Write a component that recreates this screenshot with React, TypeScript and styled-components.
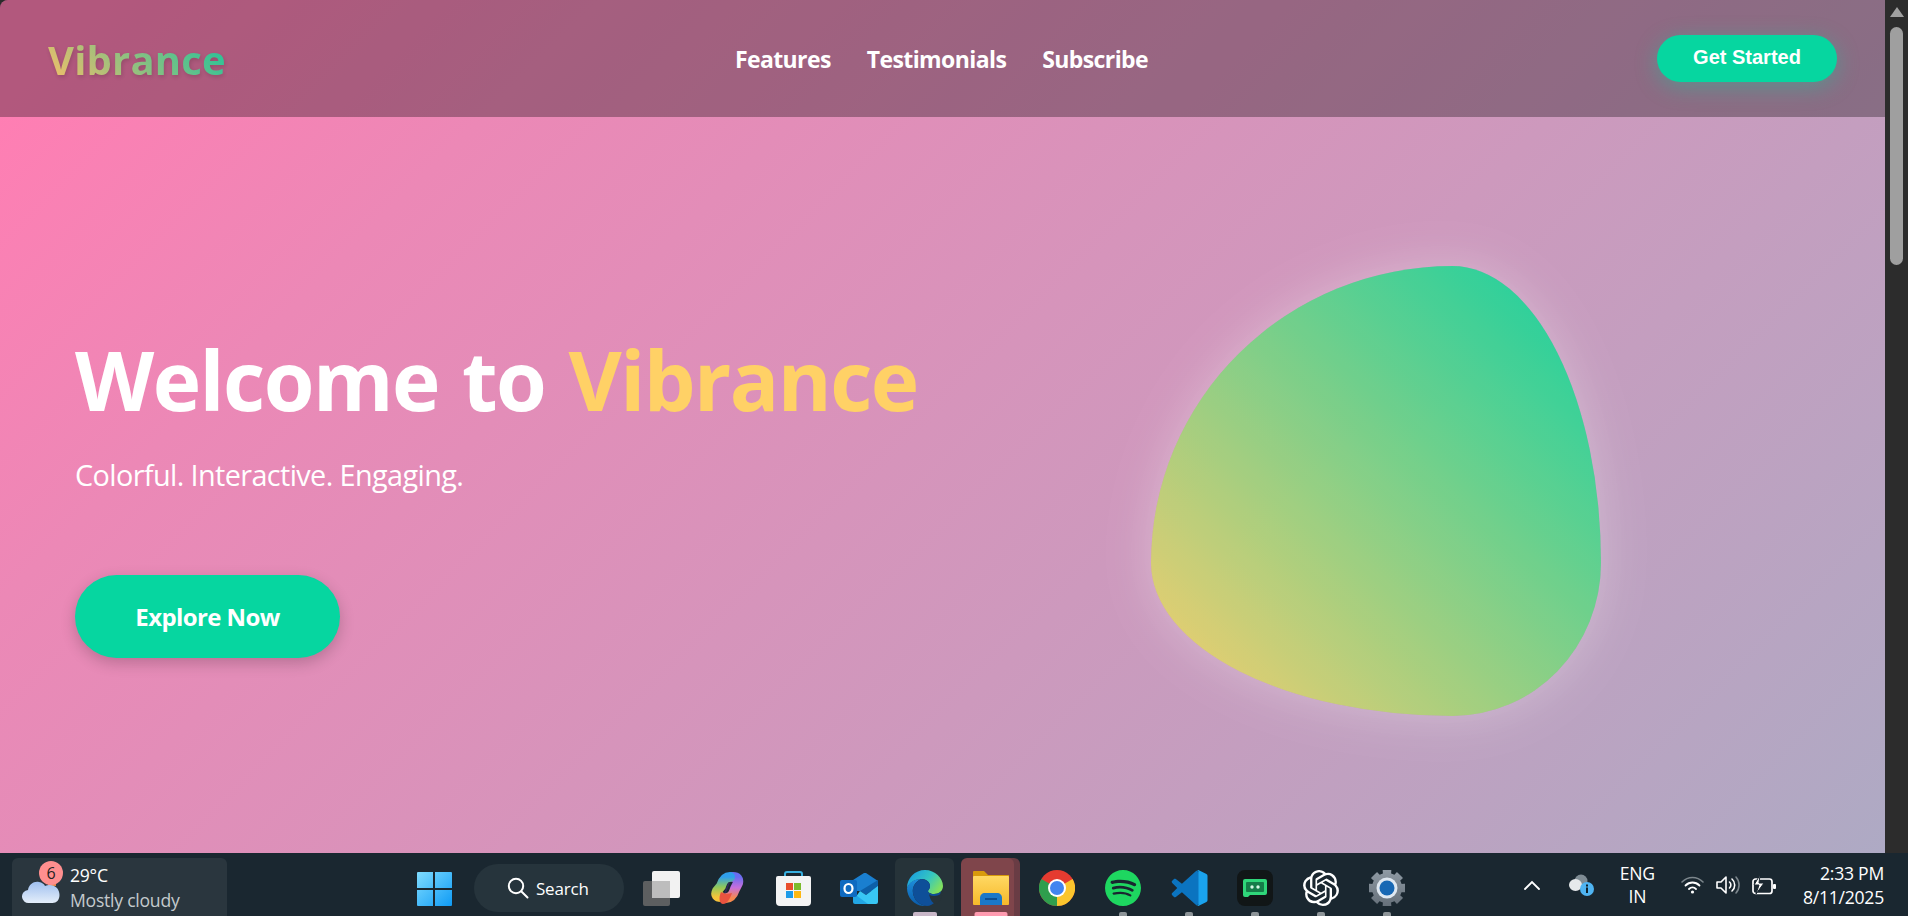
import React from "react";
import styled, { createGlobalStyle } from "styled-components";
import { SiOpenai, SiSpotify } from "react-icons/si";

const Global = createGlobalStyle`
  html, body { margin: 0; padding: 0; height: 100%; overflow: hidden; background: #1a2730; }
  #root { height: 100%; }
  * { box-sizing: border-box; }
`;

const Screen = styled.div`
  width: 1908px; height: 916px; display: flex; flex-direction: column;
  font-family: "Open Sans", "Noto Sans", sans-serif;
  background: #2b2b2b; overflow: hidden;
`;
const BrowserArea = styled.div`flex: 1; min-height: 0; display: flex;`;
const Page = styled.main`
  flex: 1; min-width: 0; display: flex; flex-direction: column;
  border-top-left-radius: 8px; overflow: hidden;
  background: linear-gradient(135deg, #ff7eb3 4%, #ec88b6 22%, #aeaac4 100%);
`;
const Header = styled.header`
  height: 117px; flex: none; display: flex; align-items: center; justify-content: space-between;
  padding: 0 48px; background: rgba(0, 0, 0, 0.3);
`;
const Logo = styled.div`
  font-size: 40px; font-weight: 700; line-height: 1; letter-spacing: 0.2px; margin-top: 3px;
  background: linear-gradient(45deg, #ffd166, #06d6a0);
  -webkit-background-clip: text; background-clip: text; color: transparent;
  filter: drop-shadow(1px 2px 2px rgba(0,0,0,.18)); opacity: .85;
`;
const Nav = styled.nav`display: flex; gap: 36px; margin-top: 2px;`;
const NavLink = styled.a`
  color: #fff; font-size: 23px; font-weight: 700; letter-spacing: -0.6px; line-height: 1;
`;
const GetStarted = styled.button`
  width: 180px; height: 47px; border: 0; border-radius: 24px; background: #06d6a0; color: #fff;
  font-family: "Liberation Sans", Arial, sans-serif; font-size: 20px; font-weight: 700; padding: 0 0 2px;
  box-shadow: 0 5px 22px rgba(6, 214, 160, 0.35);
  margin-top: -1px;
`;
const Hero = styled.section`
  flex: 1; min-height: 0; display: grid; grid-template-columns: 1fr 1fr; align-items: center;
  padding: 12px 76px 0 75px;
`;
const Copy = styled.div`display: flex; flex-direction: column; align-items: flex-start; margin-top: 6px;`;
const Title = styled.h1`
  margin: 0; font-size: 82px; font-weight: 700; line-height: 1.2; color: #fff; letter-spacing: -1.55px; word-spacing: 3.5px; white-space: nowrap;
`;
const Accent = styled.span`color: #ffd166;`;
const Subtitle = styled.p`
  margin: 28px 0 0; color: #fff; font-size: 28.8px; line-height: 1.3; font-weight: 400; letter-spacing: -0.6px;
`;
const Explore = styled.button`
  margin-top: 82px; width: 265px; height: 83px; border: 0; border-radius: 42px; background: #06d6a0; color: #fff;
  font-family: inherit; font-size: 24px; font-weight: 700; letter-spacing: -0.6px;
  box-shadow: 0 5px 15px rgba(0, 0, 0, 0.2);
`;
const BlobCell = styled.div`display: flex; justify-content: center;`;
const Blob = styled.div`
  width: 450px; height: 450px;
  border-radius: 67% 33% 33% 67% / 66% 66% 34% 34%;
  background: linear-gradient(45deg, #ffd166, #06d6a0);
  opacity: 0.93;
  box-shadow: 0 0 50px rgba(255, 255, 255, 0.32);
`;
const Scrollbar = styled.div`
  width: 23px; flex: none; background: #2c2c2c; display: flex; flex-direction: column; align-items: center; padding-top: 7px;
`;
const ScrollArrow = styled.div`
  width: 0; height: 0; border-left: 7px solid transparent; border-right: 7px solid transparent;
  border-bottom: 10px solid #a0a0a0;
`;
const ScrollThumb = styled.div`
  width: 13px; height: 238px; margin-top: 10px; border-radius: 7px; background: #9f9f9f;
`;

const Taskbar = styled.footer`
  height: 63px; flex: none; display: flex; align-items: flex-start; padding-left: 12px;
  background: #1a2730; color: #fff; font-family: "Open Sans", "Noto Sans", sans-serif;
`;
const Weather = styled.div`
  position: relative; width: 215px; height: 58px; margin-top: 5px; flex: none;
  background: rgba(255,255,255,.07); border-radius: 6px 6px 0 0;
  display: flex; align-items: center; gap: 10px; padding-left: 10px;
`;
const Badge = styled.span`
  position: absolute; left: 27px; top: 3px; width: 24px; height: 24px; border-radius: 50%;
  background: #ff8f8f; color: #222; font-size: 16px; display: flex; align-items: center; justify-content: center;
`;
const WeatherText = styled.div`display: flex; flex-direction: column; gap: 2px; font-size: 17.6px; line-height: 23px; letter-spacing: -0.25px; margin-top: 2px; white-space: nowrap;`;
const Muted = styled.span`color: #c4cacd;`;
const StartBtn = styled.div`margin: 19px 0 0 190px; width: 35px; height: 34px; flex: none; display: flex;`;
const SearchPill = styled.div`
  margin: 11px 0 0 22px; width: 150px; height: 48px; border-radius: 24px; flex: none;
  background: #26343c; display: flex; align-items: center; gap: 7px; padding-left: 33px;
  font-size: 17px; letter-spacing: -0.2px;
`;
const Apps = styled.div`display: flex; margin-left: 4px; flex: none;`;
const AppCell = styled.div<{ $tone?: "active" | "open" }>`
  position: relative; width: 66px; height: 63px; display: flex; align-items: center; justify-content: center; padding: 17px 0 10px;
  &::before {
    content: ""; position: absolute; top: 5px; bottom: 0; left: 3px; right: ${(p) => (p.$tone === "open" ? 10 : 4)}px; border-radius: 6px 6px 0 0;
    background: ${(p) => (p.$tone === "active" ? "#263339" : p.$tone === "open" ? "#7f454b" : "transparent")};
    box-shadow: ${(p) => (p.$tone === "open" ? "6px 0 0 #693c44" : "none")};
  }
  & > svg { position: relative; }
`;
const Indicator = styled.span<{ $w: number; $c: string }>`
  position: absolute; bottom: 0; left: 50%; transform: translateX(-50%); width: ${(p) => p.$w}px; height: 4px;
  border-radius: 2px 2px 0 0; background: ${(p) => p.$c};
`;
const Tray = styled.div`
  margin-left: auto; padding-right: 24px; height: 63px; display: flex; align-items: center; gap: 26px; flex: none;
`;
const Lang = styled.div`display: flex; flex-direction: column; align-items: center; font-size: 17.6px; line-height: 23px; letter-spacing: -0.25px;`;
const Quick = styled.div`display: flex; align-items: center; gap: 12px;`;
const Clock = styled.div`display: flex; flex-direction: column; align-items: flex-end; font-size: 17.6px; line-height: 24px; letter-spacing: -0.25px;`;
const ChevronSvg = styled.svg`margin-right: 3px;`;

const Win = () => (
  <svg width="35" height="34" viewBox="0 0 35 34">
    <defs><linearGradient id="w" x1="0" y1="0" x2="1" y2="1"><stop offset="0" stopColor="#7fdcff" /><stop offset="1" stopColor="#0f9bf5" /></linearGradient></defs>
    <path fill="url(#w)" d="M1 0h15v16H0V1a1 1 0 0 1 1-1zM18 0h16a1 1 0 0 1 1 1v15H18zM0 18h16v16H1a1 1 0 0 1-1-1zM18 18h17v15a1 1 0 0 1-1 1H18z" />
  </svg>
);
const SearchIcon = () => (
  <svg width="22" height="22" viewBox="0 0 22 22" fill="none" stroke="#fff" strokeWidth="2"><circle cx="9" cy="9" r="7.2" /><path d="M14.2 14.2 20.5 20.5" strokeLinecap="round" /></svg>
);
const CloudIcon = () => (
  <svg width="38" height="38" viewBox="0 0 38 38" style={{ marginTop: 8, flex: "none" }}>
    <defs><linearGradient id="c" x1="0" y1="0" x2="0" y2="1"><stop offset="0" stopColor="#9fbfef" /><stop offset="1" stopColor="#e4eefa" /></linearGradient></defs>
    <rect x="26" y="8" width="8" height="6" fill="#e8853f" />
    <path fill="url(#c)" d="M7 31a6.5 6.5 0 0 1-1-13c1-6 6-9 11-8 3 .5 5 2 6 4 4-2 9-1 12 2 1.500 2 2.500 4 2.500 7 0 5-3 8-7 8z" />
  </svg>
);
const TaskView = () => (
  <svg width="37" height="35" viewBox="0 0 37 35">
    <rect x="9" y="0" width="28" height="27" rx="2" fill="#f2f2f2" />
    <rect x="0" y="10" width="27" height="25" rx="2" fill="#5d5f60" />
    <rect x="9" y="10" width="18" height="17" fill="#bdbdbd" />
  </svg>
);
const Copilot = () => (
  <svg width="34" height="32" viewBox="0 0 34 32" fill="none" strokeLinecap="round">
    <defs>
      <linearGradient id="cp1" x1="0" y1="0" x2="0" y2="1"><stop offset="0" stopColor="#2f9fec" /><stop offset=".5" stopColor="#8fc95a" /><stop offset="1" stopColor="#f5c33a" /></linearGradient>
      <linearGradient id="cp2" x1="0" y1="0" x2="0" y2="1"><stop offset="0" stopColor="#6a6cf0" /><stop offset=".5" stopColor="#c76fdc" /><stop offset="1" stopColor="#f5894e" /></linearGradient>
    </defs>
    <path stroke="url(#cp2)" strokeWidth="10" d="M16 26c5 0 7-3 9-9l3-6c1-4-1-6-5-6" />
    <path stroke="url(#cp1)" strokeWidth="10" d="M20 5c-5 0-7 3-9 9l-4 5c-2 4 0 6 4 6" />
    <path fill="#e9533f" d="M11 20c4 2 7 2 11 1-2 6-5 11-9 11-3 0-5-5-2-12z" />
    <path stroke="#3f2f7a" strokeWidth="1.6" opacity=".55" d="M19 11l-4 10" />
  </svg>
);
const Store = () => (
  <svg width="35" height="35" viewBox="0 0 35 35">
    <path d="M9 7V3a2 2 0 0 1 2-2h13a2 2 0 0 1 2 2v4" fill="none" stroke="#38b0e0" strokeWidth="2" />
    <path fill="#f4f4f4" d="M2 5h31a2 2 0 0 1 2 2v24a4 4 0 0 1-4 4H4a4 4 0 0 1-4-4V7a2 2 0 0 1 2-2z" />
    <rect x="10" y="12" width="7" height="7" fill="#e84e2c" /><rect x="18" y="12" width="7" height="7" fill="#7cbb2c" />
    <rect x="10" y="20" width="7" height="7" fill="#1e9be8" /><rect x="18" y="20" width="7" height="7" fill="#fdb813" />
  </svg>
);
const Outlook = () => (
  <svg width="38" height="31" viewBox="0 0 38 31">
    <path fill="#1a7fd0" d="M13 7 24 0c1-.5 1.500-.5 2 0l12 8v10H13z" />
    <path fill="#0d5fa8" d="M20 18 38 7v6L26 22z" />
    <path fill="#38c6f4" d="M20 18l6 4 12-9v16a2 2 0 0 1-2 2H16l-3-3z" />
    <path fill="#22a6e4" d="M13 20l15 11H15a2 2 0 0 1-2-2z" />
    <rect x="0" y="7" width="17" height="17" rx="2" fill="#0f6ac0" />
    <ellipse cx="8.500" cy="15.500" rx="4" ry="4.500" fill="none" stroke="#fff" strokeWidth="2.200" />
  </svg>
);
const Edge = () => (
  <svg width="36" height="36" viewBox="0 0 36 36">
    <defs>
      <linearGradient id="e1" x1=".1" y1=".1" x2="1" y2=".6"><stop offset="0" stopColor="#1a9ee0" /><stop offset=".55" stopColor="#35c6c0" /><stop offset="1" stopColor="#80e060" /></linearGradient>
      <linearGradient id="e2" x1="0" y1="0" x2="0" y2="1"><stop offset="0" stopColor="#1e8fdc" /><stop offset="1" stopColor="#0a5aa8" /></linearGradient>
    </defs>
    <path fill="url(#e1)" d="M18 0c10 0 18 8 18 16 0 5-4 8-9 8-4 0-6-2-6-3s2-2 2-5c0-4-4-7-8-7C7 9 2 13 0 18 0 8 8 0 18 0z" />
    <path fill="url(#e2)" d="M0 18C2 12 8 9 14 9c-6 3-9 8-8 14 1 7 6 12 14 13C9 37 0 29 0 18z" />
    <path fill="#0e4f99" d="M14 9c5 0 9 3 9 7 0 3-2 4-2 5s2 3 6 3c3 0 6-1 7-3-1 8-8 15-14 15-8-1-13-6-14-13C5 17 8 12 14 9z" />
    <path fill="#263339" d="M36 20c-1 3-4 6-9 6-3 0-4-1-5-2 1 5 4 12 9 9 3-3 5-9 5-13z" />
  </svg>
);
const Folder = () => (
  <svg width="36" height="34" viewBox="0 0 36 34">
    <defs><linearGradient id="f" x1="0" y1="0" x2="0" y2="1"><stop offset="0" stopColor="#ffd863" /><stop offset="1" stopColor="#f6b92a" /></linearGradient></defs>
    <path fill="#d89a0c" d="M1 0h10l4 4h21v8H0V1a1 1 0 0 1 1-1z" />
    <rect x="0" y="5" width="36" height="29" rx="1" fill="url(#f)" />
    <path fill="#1b78c8" d="M7 34v-7c0-3 2-5 5-5h12c3 0 5 2 5 5v7z" />
    <rect x="12" y="27" width="12" height="2" fill="#0c4f92" />
  </svg>
);
const Chrome = () => (
  <svg width="36" height="36" viewBox="0 0 36 36">
    <circle cx="18" cy="18" r="18" fill="#e53b30" />
    <path fill="#2f9e4d" d="M18 18 2.400 9A18 18 0 0 0 18 36l4-1z" />
    <path fill="#fbc52d" d="M18 18 33.600 9A18 18 0 0 1 18 36z" />
    <circle cx="18" cy="18" r="9" fill="#fff" /><circle cx="18" cy="18" r="7" fill="#4285f0" />
  </svg>
);
const VSCode = () => (
  <svg width="37" height="36" viewBox="0 0 100 100">
    <path fill="#0b74c0" d="M96 12 69 2 29 38 12 25c-2-1-4-1-5 0l-5 5c-2 2-2 4 0 6l14 14L2 64c-2 2-2 4 0 6l5 5c1 1 3 1 5 0l17-13 40 36 27-10zM75 27 45 50l30 23z" />
    <path fill="#1aa3ee" d="M69 2c2-2 5-2 7-1l21 10c2 1 3 3 3 5v68c0 2-1 4-3 5L76 99c-2 1-5 1-7-1 3 1 6 0 6-3V5c0-3-3-4-6-3z" />
  </svg>
);
const Terminal = () => (
  <svg width="36" height="36" viewBox="0 0 36 36">
    <rect width="36" height="36" rx="8" fill="#111617" />
    <path d="M6 11a2 2 0 0 1 2-2h20a2 2 0 0 1 2 2v12a2 2 0 0 1-2 2H13l-2 2H8a2 2 0 0 1-2-2z" fill="#2fd67a" />
    <rect x="9" y="12" width="18" height="10" rx="1" fill="#157d49" />
    <circle cx="15" cy="17" r="1.700" fill="#d6f8e4" /><circle cx="21" cy="17" r="1.700" fill="#d6f8e4" />
  </svg>
);
const gearPoints = Array.from({ length: 8 })
  .flatMap((_, i) => {
    const a = (i * Math.PI) / 4 - Math.PI / 2;
    return [-0.2, 0.2, 0.23, 0.56].map((o, j) => {
      const r = j === 0 || j === 1 ? 18 : 14.5;
      const t = a + o;
      return `${(18 + r * Math.cos(t)).toFixed(2)},${(18 + r * Math.sin(t)).toFixed(2)}`;
    });
  })
  .join(" ");
const Gear = () => (
  <svg width="36" height="36" viewBox="0 0 36 36">
    <defs><linearGradient id="g" x1="0" y1="0" x2="0" y2="1"><stop offset="0" stopColor="#8f9aa4" /><stop offset="1" stopColor="#66707a" /></linearGradient></defs>
    <polygon points={gearPoints} fill="url(#g)" stroke="url(#g)" strokeWidth="1.500" strokeLinejoin="round" />
    <circle cx="18" cy="18" r="10.500" fill="#dfe8f1" /><circle cx="18" cy="18" r="7.500" fill="#1868b4" />
  </svg>
);
const Chevron = () => (
  <ChevronSvg width="16" height="10" viewBox="0 0 16 10" fill="none" stroke="#fff" strokeWidth="1.800"><path d="M1 9 8 2l7 7" strokeLinecap="round" /></ChevronSvg>
);
const OneDrive = () => (
  <svg width="25" height="22" viewBox="0 0 25 22">
    <circle cx="12" cy="7" r="6.500" fill="#7f8c94" /><ellipse cx="6.500" cy="11" rx="6.500" ry="6" fill="#e6e9eb" />
    <circle cx="18" cy="15" r="7" fill="#4fb4f2" /><rect x="17" y="13.500" width="2" height="5.500" fill="#10222c" /><rect x="17" y="10.500" width="2" height="2" fill="#10222c" />
  </svg>
);
const Wifi = () => (
  <svg width="23" height="18" viewBox="0 0 23 18" fill="none" strokeLinecap="round">
    <path d="M1 6c6-6 15-6 21 0" stroke="#7b858b" strokeWidth="1.600" />
    <path d="M4.500 9.500c4-4 10-4 14 0M8 13c2-2 5-2 7 0" stroke="#fff" strokeWidth="1.800" />
    <circle cx="11.500" cy="16" r="1.600" fill="#fff" />
  </svg>
);
const Volume = () => (
  <svg width="24" height="20" viewBox="0 0 24 20" fill="none" strokeLinecap="round" strokeLinejoin="round">
    <path d="M1 7v6h4l5 5V2L5 7z" stroke="#fff" strokeWidth="1.600" />
    <path d="M13.500 7a4 4 0 0 1 0 6M16 4a8 8 0 0 1 0 12" stroke="#fff" strokeWidth="1.600" />
    <path d="M20 2a12 12 0 0 1 0 16" stroke="#7b858b" strokeWidth="1.600" />
  </svg>
);
const Battery = () => (
  <svg width="25" height="20" viewBox="0 0 25 20" fill="none">
    <rect x="1" y="4" width="19" height="14.500" rx="2.500" stroke="#fff" strokeWidth="1.700" />
    <rect x="21" y="9" width="3" height="5" rx="1" fill="#fff" />
    <path d="M8 0 2 10h5l-3 9 8-11H7z" fill="#fff" stroke="#1a2730" strokeWidth="1" />
  </svg>
);

export default function App() {
  return (
    <Screen>
      <Global />
      <BrowserArea>
        <Page>
          <Header>
            <Logo>Vibrance</Logo>
            <Nav>
              <NavLink>Features</NavLink>
              <NavLink>Testimonials</NavLink>
              <NavLink>Subscribe</NavLink>
            </Nav>
            <GetStarted>Get Started</GetStarted>
          </Header>
          <Hero>
            <Copy>
              <Title>Welcome to <Accent>Vibrance</Accent></Title>
              <Subtitle>Colorful. Interactive. Engaging.</Subtitle>
              <Explore>Explore Now</Explore>
            </Copy>
            <BlobCell><Blob /></BlobCell>
          </Hero>
        </Page>
        <Scrollbar><ScrollArrow /><ScrollThumb /></Scrollbar>
      </BrowserArea>
      <Taskbar>
        <Weather>
          <CloudIcon />
          <Badge>6</Badge>
          <WeatherText><span>29°C</span><Muted>Mostly cloudy</Muted></WeatherText>
        </Weather>
        <StartBtn><Win /></StartBtn>
        <SearchPill><SearchIcon />Search</SearchPill>
        <Apps>
          <AppCell><TaskView /></AppCell>
          <AppCell><Copilot /></AppCell>
          <AppCell><Store /></AppCell>
          <AppCell><Outlook /></AppCell>
          <AppCell $tone="active"><Edge /><Indicator $w={24} $c="#c8b7c8" /></AppCell>
          <AppCell $tone="open"><Folder /><Indicator $w={33} $c="#ff9bb0" /></AppCell>
          <AppCell><Chrome /></AppCell>
          <AppCell><SiSpotify size={36} color="#1ed760" /><Indicator $w={8} $c="#8d9498" /></AppCell>
          <AppCell><VSCode /><Indicator $w={8} $c="#8d9498" /></AppCell>
          <AppCell><Terminal /><Indicator $w={8} $c="#8d9498" /></AppCell>
          <AppCell><SiOpenai size={36} color="#fff" /><Indicator $w={8} $c="#8d9498" /></AppCell>
          <AppCell><Gear /><Indicator $w={8} $c="#8d9498" /></AppCell>
        </Apps>
        <Tray>
          <Chevron />
          <OneDrive />
          <Lang><span>ENG</span><span>IN</span></Lang>
          <Quick><Wifi /><Volume /><Battery /></Quick>
          <Clock><span>2:33 PM</span><span>8/11/2025</span></Clock>
        </Tray>
      </Taskbar>
    </Screen>
  );
}
